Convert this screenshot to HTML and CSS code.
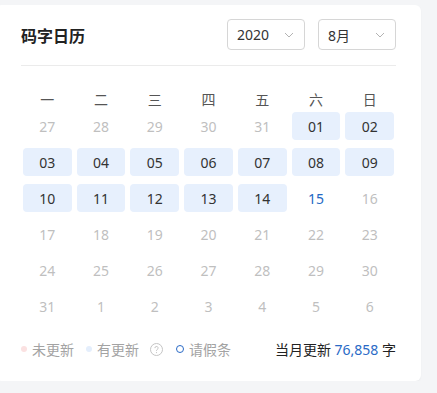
FILE: index.html
```html
<!DOCTYPE html>
<html lang="zh-CN">
<head>
    <meta charset="UTF-8">
    <meta name="viewport" content="width=device-width, initial-scale=1.0">
    <title>码字日历</title>
    <link rel="stylesheet" href="styles.css">
</head>
<body>
    <div class="card">
        <div class="card-header">
            <h2>码字日历</h2>
            <div class="selects">
                <div class="select">
                    <span>2020</span>
                    <svg width="10" height="6" viewBox="0 0 10 6"><path d="M1 1l4 4 4-4" fill="none" stroke="#b3b3b3" stroke-width="1"/></svg>
                </div>
                <div class="select">
                    <span>8月</span>
                    <svg width="10" height="6" viewBox="0 0 10 6"><path d="M1 1l4 4 4-4" fill="none" stroke="#b3b3b3" stroke-width="1"/></svg>
                </div>
            </div>
        </div>

        <div class="weekdays">
            <span>一</span><span>二</span><span>三</span><span>四</span><span>五</span><span>六</span><span>日</span>
        </div>
        <div class="days" id="days"></div>

        <div class="legend">
            <div class="legend-left">
                <span class="dot dot-none"></span><span class="legend-text">未更新</span>
                <span class="dot dot-done"></span><span class="legend-text">有更新</span>
                <svg class="help" width="13" height="13" viewBox="0 0 13 13">
                    <circle cx="6.5" cy="6.5" r="6" fill="none" stroke="#c4c4c4" stroke-width="1"/>
                    <path d="M4.9 5.1a1.6 1.6 0 1 1 2.3 1.4c-.5.3-.7.6-.7 1.1v.4" fill="none" stroke="#c4c4c4" stroke-width="1"/>
                    <circle cx="6.5" cy="9.6" r=".6" fill="#c4c4c4"/>
                </svg>
                <span class="ring"></span><span class="legend-text">请假条</span>
            </div>
            <div class="total">当月更新 <span class="num">76,858</span> 字</div>
        </div>
    </div>

    <script>
        const days = [
            [27, "other"], [28, "other"], [29, "other"], [30, "other"], [31, "other"], ["01", "done"], ["02", "done"],
            ["03", "done"], ["04", "done"], ["05", "done"], ["06", "done"], ["07", "done"], ["08", "done"], ["09", "done"],
            ["10", "done"], ["11", "done"], ["12", "done"], ["13", "done"], ["14", "done"], ["15", "today"], [16, "other"],
            [17, "other"], [18, "other"], [19, "other"], [20, "other"], [21, "other"], [22, "other"], [23, "other"],
            [24, "other"], [25, "other"], [26, "other"], [27, "other"], [28, "other"], [29, "other"], [30, "other"],
            [31, "other"], [1, "other"], [2, "other"], [3, "other"], [4, "other"], [5, "other"], [6, "other"]
        ];

        const box = document.getElementById("days");
        days.forEach(([n, type]) => {
            const cell = document.createElement("div");
            cell.className = "day " + type;
            cell.textContent = n;
            box.appendChild(cell);
        });
    </script>
</body>
</html>
```

FILE: styles.css
```css
body {
    margin: 0;
    padding: 5px 0 0;
    background-color: #f4f5f7;
    font-family: "Noto Sans", "Noto Sans CJK SC", sans-serif;
    overflow: hidden;
}

.card {
    width: 375px;
    margin-left: -4px;
    padding: 14px 25px 22px;
    background: white;
    border-radius: 6px;
    box-shadow: 0 1px 2px rgba(0, 0, 0, 0.04);
}

.card-header {
    display: flex;
    align-items: center;
    justify-content: space-between;
    padding-bottom: 15px;
    border-bottom: 1px solid #ebebeb;
}

.card-header h2 {
    margin: 0;
    font-size: 16px;
    font-weight: bold;
    color: #222;
}

.selects {
    display: flex;
    gap: 13px;
}

.select {
    box-sizing: border-box;
    width: 78px;
    height: 31px;
    padding: 0 10px 0 9px;
    display: flex;
    align-items: center;
    justify-content: space-between;
    border: 1px solid #d6d6d6;
    border-radius: 4px;
    font-size: 14px;
    color: #333;
}

.weekdays {
    display: grid;
    grid-template-columns: repeat(7, 1fr);
    column-gap: 5px;
    padding: 0 2px;
    margin-top: 19px;
    height: 27px;
    align-items: center;
    text-align: center;
    font-size: 14px;
    color: #555;
}

.days {
    display: grid;
    grid-template-columns: repeat(7, 1fr);
    grid-auto-rows: 28px;
    gap: 8px 5px;
    padding: 0 2px;
    font-size: 14px;
}

.day {
    display: flex;
    align-items: center;
    justify-content: center;
    border-radius: 4px;
}

.day.other {
    color: #bfbfbf;
}

.day.done {
    background-color: #e7f0fd;
    color: #333;
}

.day.today {
    color: #2468c4;
}

.legend {
    display: flex;
    align-items: center;
    justify-content: space-between;
    margin-top: 19px;
    height: 20px;
    font-size: 14px;
}

.legend-left {
    display: flex;
    align-items: center;
}

.dot {
    width: 6px;
    height: 6px;
    border-radius: 50%;
    margin-right: 5px;
}

.dot-none {
    background-color: #fbe1e1;
}

.dot-done {
    background-color: #e4eefc;
}

.legend-text {
    color: #a3a3a3;
    margin-right: 12px;
}

.help {
    margin: 0 13px 0 -1px;
}

.ring {
    box-sizing: border-box;
    width: 8px;
    height: 8px;
    border: 1.5px solid #2a6ac6;
    border-radius: 50%;
    margin-right: 5px;
}

.total {
    color: #222;
}

.total .num {
    color: #2a6ac6;
}
```
